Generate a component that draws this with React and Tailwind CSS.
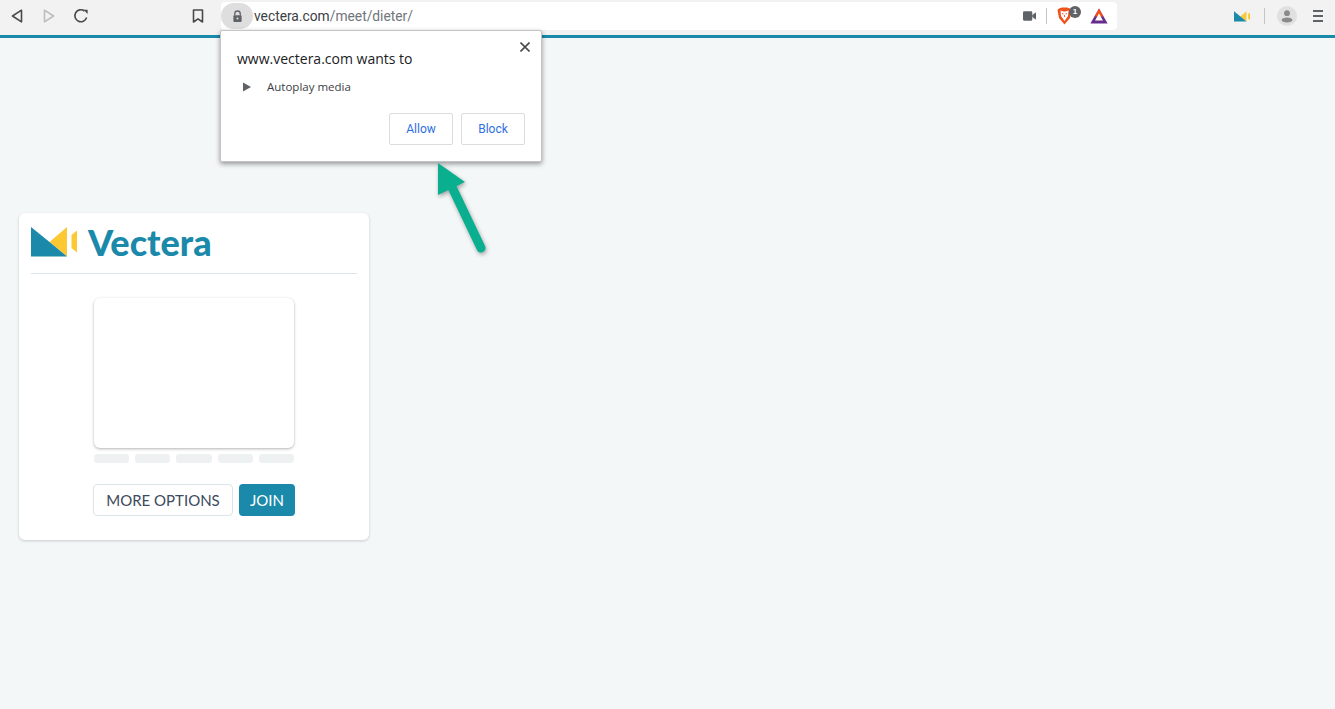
import React from 'react';

const LogoMark = ({ className }) => (
  <svg viewBox="0 0 46 30" className={className}>
    <path d="M36 0 L36 29.5 L18.5 15 Z" fill="#fcc934" />
    <path d="M0 0 L18.5 15 L36 29.5 L0 29.5 Z" fill="#1a89aa" />
    <path d="M46 3.5 L46 25.5 L40.5 21 L40.5 8 Z" fill="#fcc934" />
  </svg>
);

const BrowserBar = () => (
  <div className="h-[38px] bg-[#f2f2f2] border-b-[3px] border-[#1a89aa] flex items-start shrink-0">
    {/* nav buttons */}
    <div className="w-[221px] h-[32px] flex items-center shrink-0">
      <svg viewBox="0 0 14 14" className="w-[14px] h-[14px] ml-[10px]" fill="none" stroke="#4a4a4a" strokeWidth="1.6" strokeLinejoin="round">
        <path d="M11.5 1.2 L2.5 7 L11.5 12.8 Z" />
      </svg>
      <svg viewBox="0 0 14 14" className="w-[14px] h-[14px] ml-[18px]" fill="none" stroke="#bdbdbd" strokeWidth="1.6" strokeLinejoin="round">
        <path d="M2.5 1.2 L11.5 7 L2.5 12.8 Z" />
      </svg>
      <svg viewBox="0 0 16 16" className="w-[16px] h-[16px] ml-[17px]" fill="none" stroke="#4a4a4a" strokeWidth="1.6">
        <path d="M13.6 9.5 A6 6 0 1 1 11.5 3" />
        <path d="M10.5 1.8 L14.6 1.8 L14.6 6 Z" fill="#4a4a4a" stroke="none" />
      </svg>
      <svg viewBox="0 0 12 14" className="w-[12px] h-[14px] ml-[103px]" fill="none" stroke="#4a4a4a" strokeWidth="1.6" strokeLinejoin="round">
        <path d="M1.5 1 H10.5 V13 L6 9.8 L1.5 13 Z" />
      </svg>
    </div>

    {/* address bar */}
    <div className="w-[896px] h-[28px] mt-[2px] bg-white rounded-[4px] flex items-center shrink-0">
      <div className="w-[32px] h-[26px] rounded-full bg-[#dedede] flex items-center justify-center shrink-0">
        <svg viewBox="0 0 12 14" className="w-[11px] h-[13px]">
          <path d="M3 6 V4 A3 3 0 0 1 9 4 V6" fill="none" stroke="#5f6368" strokeWidth="1.4" />
          <rect x="1.5" y="5.5" width="9" height="7.5" rx="1" fill="#5f6368" />
          <circle cx="6" cy="9.2" r="1.1" fill="#dedede" />
        </svg>
      </div>
      <div className="ml-px mt-px text-[13.8px] leading-none font-['Roboto',sans-serif] text-[#70757a]">
        <span className="text-[#3c4043]">vectera.com</span>/meet/dieter/
      </div>
      <div className="ml-auto flex items-center">
        <svg viewBox="0 0 14 10" className="w-[13px] h-[10px]" fill="#5f6368">
          <rect x="0" y="0" width="10" height="10" rx="1.2" />
          <path d="M10 4 L14 1 V9 L10 6 Z" />
        </svg>
        <div className="w-px h-[16px] bg-[#c4c4c4] ml-[10px]" />
        <div className="relative ml-[10px] w-[15px] h-[18px]">
          <svg viewBox="0 0 15 18" className="w-[15px] h-[18px]">
            <path d="M2 1.5 L5 0.5 H10 L13 1.5 L14.5 3 L13 11 L7.5 17.5 L2 11 L0.5 3 Z" fill="#f1511b" />
            <path d="M3.5 3.5 L6.5 4.5 H8.5 L11.5 3.5 L11 9 L7.5 14 L4 9 Z" fill="#fff" />
            <path d="M5 6.5 L6.5 7 M10 6.5 L8.5 7 M7.5 8 V10" stroke="#f1511b" strokeWidth="0.9" fill="none" />
          </svg>
          <span className="absolute left-[12px] -top-[1px] w-[12px] h-[12px] rounded-full bg-[#5f6368] text-white text-[8px] leading-[12px] text-center font-['Liberation_Sans',sans-serif] font-bold">1</span>
        </div>
        <svg viewBox="0 0 18 16" className="w-[18px] h-[16px] ml-[18px] mr-[9px]">
          <path d="M9 0.5 L17.6 15.5 H0.4 Z" fill="#662d91" />
          <path d="M9 0.5 L13.5 8.4 H4.5 Z" fill="#f1511b" />
          <path d="M9 5.5 L13 12.6 H5 Z" fill="#fff" />
        </svg>
      </div>
    </div>

    {/* right side */}
    <div className="flex-1 h-[32px] flex items-center">
      <LogoMark className="w-[16px] h-[11px] ml-[117px]" />
      <div className="w-px h-[16px] bg-[#c4c4c4] ml-[14px]" />
      <div className="w-[20px] h-[20px] rounded-full bg-[#e0e0e0] ml-[12px] flex items-center justify-center">
        <svg viewBox="0 0 14 14" className="w-[14px] h-[14px]" fill="#8a8a8a">
          <circle cx="7" cy="4.2" r="2.9" />
          <ellipse cx="7" cy="11" rx="5.4" ry="2.6" />
        </svg>
      </div>
      <div className="ml-[16px] flex flex-col gap-[3px]">
        <div className="w-[10px] h-[2px] bg-[#5f6368]" />
        <div className="w-[10px] h-[2px] bg-[#5f6368]" />
        <div className="w-[10px] h-[2px] bg-[#5f6368]" />
      </div>
    </div>
  </div>
);

const PermissionPopup = () => (
  <div className="absolute left-[220px] top-[30px] w-[322px] h-[132px] bg-white border border-[#c4c4c4] rounded-[2px] shadow-[0_2px_5px_rgba(0,0,0,0.4)] font-['Roboto',sans-serif]">
    <svg viewBox="0 0 10 10" className="absolute right-[11px] top-[11px] w-[10px] h-[10px]" stroke="#4a4a4a" strokeWidth="1.6">
      <path d="M0.5 0.5 L9.5 9.5 M9.5 0.5 L0.5 9.5" />
    </svg>
    <div className="pl-[16px] pt-[19px] text-[14px] leading-[18px] text-[#202124] font-['Open_Sans',sans-serif]">www.vectera.com wants to</div>
    <div className="flex items-center mt-[11px] pl-[22px]">
      <svg viewBox="0 0 9 10" className="w-[8px] h-[10px]" fill="#5f6368">
        <path d="M0 0 L9 5 L0 10 Z" />
      </svg>
      <span className="ml-[16px] text-[11.5px] leading-[16px] text-[#3c4043] font-['Open_Sans',sans-serif]">Autoplay media</span>
    </div>
    <div className="flex justify-end gap-[8px] pr-[16px] mt-[18px]">
      <button className="w-[64px] h-[32px] border border-[#dadce0] rounded-[2px] text-[12px] text-[#2f6fe4] font-normal">Allow</button>
      <button className="w-[64px] h-[32px] border border-[#dadce0] rounded-[2px] text-[12px] text-[#2f6fe4] font-normal">Block</button>
    </div>
  </div>
);

const GreenArrow = () => (
  <svg viewBox="0 0 60 100" className="absolute left-[430px] top-[157px] w-[60px] h-[100px] drop-shadow-[1px_2px_2px_rgba(0,0,0,0.35)]">
    <path d="M8 6 L35 25 L8 38 Z" fill="#0aaf8f" />
    <path d="M21 28 L51 91" stroke="#0aaf8f" strokeWidth="9" strokeLinecap="round" fill="none" />
  </svg>
);

const JoinCard = () => (
  <div className="ml-[19px] mt-[175px] w-[350px] h-[327px] bg-white rounded-[6px] shadow-[0_1px_3px_rgba(0,0,0,0.18)] px-[12px]">
    <div className="h-[61px] flex items-center border-b border-[#dde4e8]">
      <LogoMark className="w-[46px] h-[30px] mt-[-3px]" />
      <span className="ml-[11px] text-[36px] leading-none font-black text-[#1a89aa] font-['Lato',sans-serif] mt-[-3px]">Vectera</span>
    </div>
    <div className="w-[200px] mx-auto mt-[24px]">
      <div className="h-[150px] w-[200px] bg-white rounded-[6px] shadow-[0_1px_3px_rgba(0,0,0,0.3)]" />
      <div className="flex justify-between w-[200px] mt-[6px]">
        <div className="w-[35px] h-[9px] rounded-[3px] bg-[#eef1f2]" />
        <div className="w-[35px] h-[9px] rounded-[3px] bg-[#eef1f2]" />
        <div className="w-[36px] h-[9px] rounded-[3px] bg-[#eef1f2]" />
        <div className="w-[35px] h-[9px] rounded-[3px] bg-[#eef1f2]" />
        <div className="w-[35px] h-[9px] rounded-[3px] bg-[#eef1f2]" />
      </div>
      <div className="flex gap-[6px] mt-[21px] -ml-px font-['Lato',sans-serif]">
        <button className="w-[140px] shrink-0 h-[32px] border border-[#dde4e8] rounded-[4px] text-[15px] text-[#3c4a5c]">MORE OPTIONS</button>
        <button className="w-[56px] shrink-0 h-[32px] bg-[#1a89aa] rounded-[4px] text-[15px] text-white">JOIN</button>
      </div>
    </div>
  </div>
);

export default function App() {
  return (
    <div className="relative h-[709px] w-full overflow-hidden bg-[#f4f7f8] flex flex-col">
      <BrowserBar />
      <JoinCard />
      <PermissionPopup />
      <GreenArrow />
    </div>
  );
}
